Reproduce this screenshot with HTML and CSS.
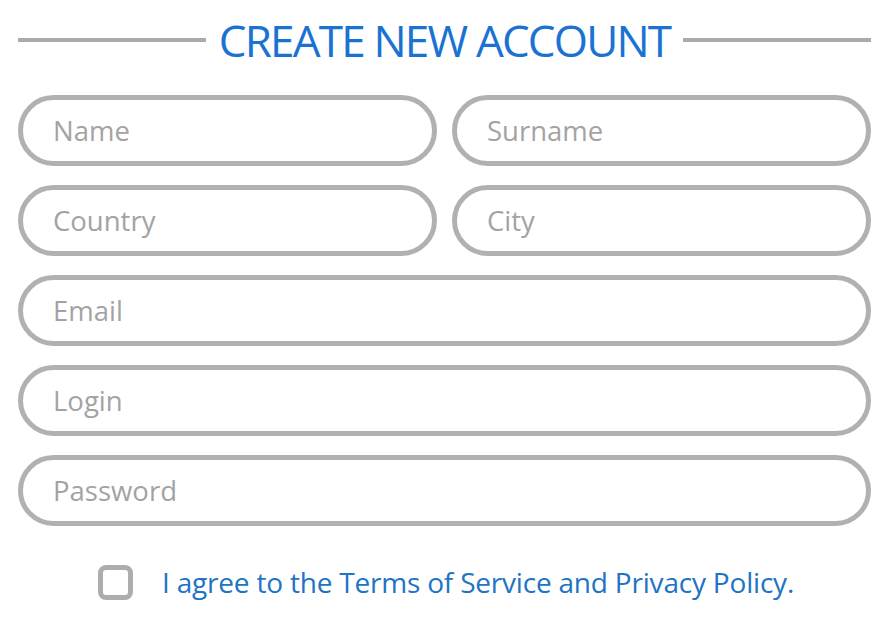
FILE: index.html
```html
<!DOCTYPE html>
<html>
<head>
  <title>Create New Account</title>
  <link rel="stylesheet" href="styles.css">
</head>
<body>
  <div class="form">
    <div class="title-row">
      <span class="rule"></span>
      <h1>CREATE NEW ACCOUNT</h1>
      <span class="rule"></span>
    </div>

    <div class="fields">
      <div class="field"><span>Name</span></div>
      <div class="field"><span>Surname</span></div>
      <div class="field"><span>Country</span></div>
      <div class="field"><span>City</span></div>
      <div class="field wide"><span>Email</span></div>
      <div class="field wide"><span>Login</span></div>
      <div class="field wide"><span>Password</span></div>
    </div>

    <label class="agree">
      <span class="box"></span>
      <span class="agree-text">I agree to the Terms of Service and Privacy Policy.</span>
    </label>
  </div>
</body>
</html>
```
FILE: styles.css
```css
body {
  margin: 0;
  background-color: #fff;
  font-family: 'Open Sans', 'Liberation Sans', sans-serif;
}

.form {
  width: 853px;
  padding: 18px 0 0 18px;
}

.title-row {
  display: flex;
  align-items: center;
  gap: 13px;
  height: 44px;
}

.rule {
  flex: 1;
  height: 4px;
  background-color: #aaa;
}

.title-row h1 {
  margin: 0;
  font-size: 44px;
  font-weight: 400;
  letter-spacing: -1.8px;
  color: #1a72d2;
  line-height: 44px;
}

.fields {
  display: grid;
  grid-template-columns: 1fr 1fr;
  column-gap: 15px;
  row-gap: 19px;
  margin-top: 33px;
}

.field {
  height: 71px;
  box-sizing: border-box;
  border: 5px solid #b1b1b1;
  border-radius: 36px;
  display: flex;
  align-items: center;
  padding-left: 30px;
}

.field.wide {
  grid-column: 1 / 3;
}

.field span {
  font-size: 27.5px;
  color: #a3a3a3;
}

.agree {
  display: flex;
  align-items: center;
  gap: 29px;
  margin: 37px 0 0 80px;
}

.box {
  width: 35px;
  height: 35px;
  box-sizing: border-box;
  border: 5px solid #adadad;
  border-radius: 8px;
}

.agree-text {
  font-size: 28px;
  color: #2173c6;
  letter-spacing: -0.2px;
}
```
